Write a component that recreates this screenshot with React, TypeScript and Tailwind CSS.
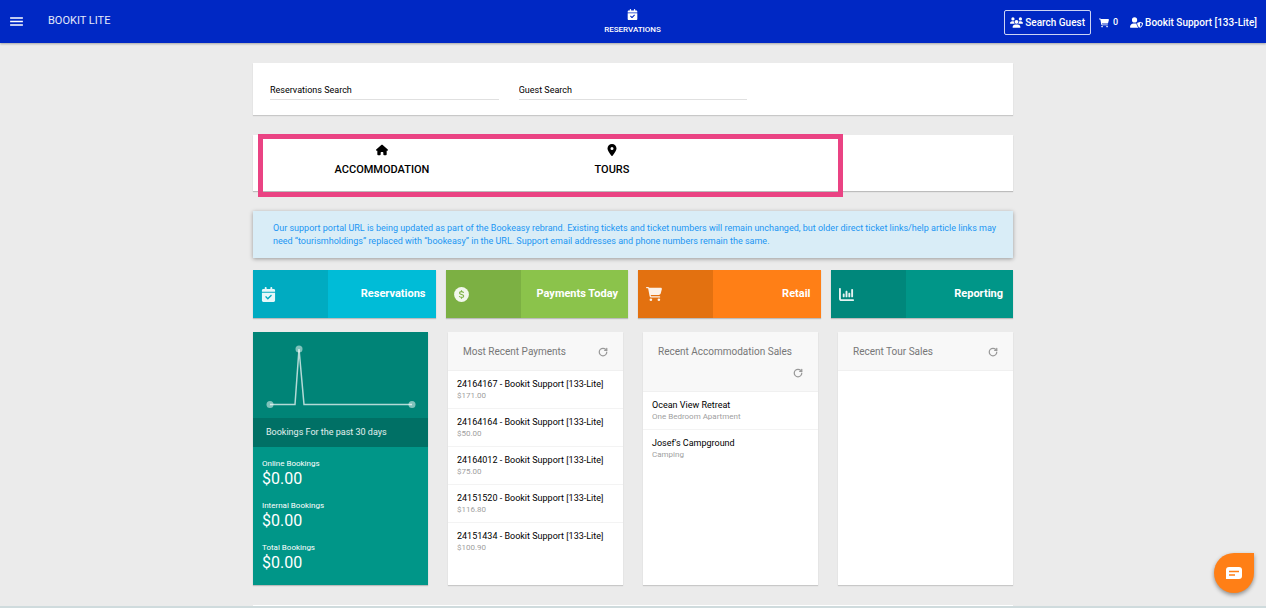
import React from "react";
import { RotateCw } from "lucide-react";
import {
  FaCalendarCheck,
  FaCartShopping,
  FaChartColumn,
  FaHouse,
  FaLocationDot,
  FaUserShield,
  FaUsers,
} from "react-icons/fa6";
import { MdMenu } from "react-icons/md";

function DollarCircle({ size }: { size: number }) {
  return (
    <svg width={size} height={size} viewBox="0 0 15 15" fill="none">
      <circle cx="7.500" cy="7.500" r="7.400" fill="currentColor" />
      <path
        d="M9.600 5.900C9.400 5 8.600 4.600 7.500 4.600C6.300 4.600 5.500 5.100 5.500 6C5.500 8 9.700 6.900 9.700 9C9.700 9.900 8.800 10.400 7.600 10.400C6.300 10.400 5.500 9.900 5.300 9M7.500 3.300V4.600M7.500 10.400V11.700"
        stroke="#7cb043"
        strokeWidth="1.100"
      />
    </svg>
  );
}

const tiles = [
  { title: "Reservations", icon: FaCalendarCheck, size: 15, dark: "bg-[#00abc1]", light: "bg-[#00bcd7]" },
  { title: "Payments Today", icon: DollarCircle, size: 15, dark: "bg-[#7cb043]", light: "bg-[#8bc34b]" },
  { title: "Retail", icon: FaCartShopping, size: 16, dark: "bg-[#e37110]", light: "bg-[#ff7f16]" },
  { title: "Reporting", icon: FaChartColumn, size: 15, dark: "bg-[#00877b]", light: "bg-[#009688]" },
];

const payments = [
  { title: "24164167 - Bookit Support [133-Lite]", sub: "$171.00" },
  { title: "24164164 - Bookit Support [133-Lite]", sub: "$50.00" },
  { title: "24164012 - Bookit Support [133-Lite]", sub: "$75.00" },
  { title: "24151520 - Bookit Support [133-Lite]", sub: "$116.80" },
  { title: "24151434 - Bookit Support [133-Lite]", sub: "$100.90" },
];

const sales = [
  { title: "Ocean View Retreat", sub: "One Bedroom Apartment" },
  { title: "Josef's Campground", sub: "Camping" },
];

const totals = [
  { label: "Online Bookings", value: "$0.00" },
  { label: "Internal Bookings", value: "$0.00" },
  { label: "Total Bookings", value: "$0.00" },
];

function Header() {
  return (
    <header className="grid h-[43px] grid-cols-[1fr_auto_1fr] items-center bg-[#0028c4] pr-[9px] pl-2 text-white shadow-[0_1px_2px_rgba(0,0,0,0.3)]">
      <div className="flex items-center gap-[23px]">
        <button aria-label="Menu" className="cursor-pointer">
          <MdMenu size={17} />
        </button>
        <a href="#" className="text-[11px] text-white/90">
          BOOKIT LITE
        </a>
      </div>
      <a href="#" className="flex flex-col items-center gap-1 pt-[2px] text-[8px] leading-3 font-medium">
        <FaCalendarCheck size={11} />
        RESERVATIONS
      </a>
      <div className="flex items-center justify-end pt-[2px] text-[10px] font-medium">
        <button className="flex h-[25px] cursor-pointer items-center gap-[2px] rounded-xs border border-white/80 px-[5px]">
          <FaUsers size={13} />
          Search Guest
        </button>
        <a href="#" className="ml-2 flex items-center gap-1 text-[9px]">
          <FaCartShopping size={10} />0
        </a>
        <a href="#" className="ml-3 flex items-center gap-[2px]">
          <FaUserShield size={13} />
          Bookit Support [133-Lite]
        </a>
      </div>
    </header>
  );
}

function ListCard({
  title,
  items,
  wrap,
}: {
  title: string;
  items: { title: string; sub: string }[];
  wrap?: boolean;
}) {
  return (
    <section className="bg-white shadow-[0_1px_1px_rgba(0,0,0,0.15)]">
      <div
        className={
          wrap
            ? "flex h-[60px] flex-col border-b border-[#f0f0f0] bg-[#f8f8f8] px-[15px] pt-3"
            : "flex h-[39px] justify-between border-b border-[#f0f0f0] bg-[#f8f8f8] px-[15px] pt-3"
        }
      >
        <h2 className="text-[10px] leading-4 text-[#777]">{title}</h2>
        <button
          aria-label={"Refresh " + title}
          className={wrap ? "mt-2 cursor-pointer self-end text-[#999]" : "cursor-pointer self-start pt-[3px] text-[#999]"}
        >
          <RotateCw size={10} strokeWidth={3} />
        </button>
      </div>
      <ul>
        {items.map((item) => (
          <li key={item.title} className="h-[38px] border-b border-[#f3f3f3] px-[9px] pt-[7px] last:border-0">
            <p className="text-[9px] leading-3 text-black">{item.title}</p>
            <p className="text-[8px] leading-3 text-[#a0a0a0]">{item.sub}</p>
          </li>
        ))}
      </ul>
    </section>
  );
}

function BookingsCard() {
  return (
    <section className="bg-[#009688] text-white shadow-[0_1px_1px_rgba(0,0,0,0.2)]">
      <div className="h-[86px] bg-[#008477]">
        <svg viewBox="0 0 175 86" className="h-full w-full" fill="none">
          <path d="M17 72.500H42L46 17L51 72.500H159" stroke="#fff" strokeOpacity="0.7" strokeWidth="1.500" />
          <circle cx="17" cy="72.500" r="3.500" fill="#fff" fillOpacity="0.5" />
          <circle cx="46" cy="17" r="3.500" fill="#fff" fillOpacity="0.5" />
          <circle cx="159" cy="72.500" r="3.500" fill="#fff" fillOpacity="0.5" />
        </svg>
      </div>
      <h2 className="flex h-[29px] items-center bg-[#007065] px-[13px] pt-px text-[9px] text-white/90">
        Bookings For the past 30 days
      </h2>
      <dl className="flex flex-col gap-3 px-[9px] pt-[11px]">
        {totals.map((total) => (
          <div key={total.label}>
            <dt className="text-[8px] leading-3">{total.label}</dt>
            <dd className="text-[16px] leading-[18px]">{total.value}</dd>
          </div>
        ))}
      </dl>
    </section>
  );
}

function App() {
  return (
    <div className="relative min-h-screen bg-[#ebebeb] font-['Roboto','Liberation_Sans',sans-serif]">
      <Header />
      <main className="mx-auto max-w-[760px] pt-5">
        <form className="grid h-[52px] grid-cols-3 gap-5 bg-white px-[17px] pt-[17px] shadow-[0_1px_1px_rgba(0,0,0,0.15)]">
          <input
            aria-label="Reservations Search"
            placeholder="Reservations Search"
            className="h-5 w-full border-b border-[#e0e0e0] text-[9px] placeholder:text-black"
          />
          <input
            aria-label="Guest Search"
            placeholder="Guest Search"
            className="h-5 w-full border-b border-[#e0e0e0] text-[9px] placeholder:text-black"
          />
        </form>

        <nav className="relative mt-5 flex h-14 bg-white pl-[14px] text-[11px] leading-4 font-medium text-black shadow-[0_1px_1px_rgba(0,0,0,0.2)]">
          <a href="#" className="flex w-[230px] flex-col items-center gap-[6px] pt-[9px]">
            <FaHouse size={12} />
            ACCOMMODATION
          </a>
          <a href="#" className="flex w-[230px] flex-col items-center gap-[6px] pt-[9px]">
            <FaLocationDot size={12} />
            TOURS
          </a>
          <div className="pointer-events-none absolute -top-px left-[5px] h-[63px] w-[585px] border-[5px] border-[#ea4383]" />
        </nav>

        <p className="mt-5 bg-[#d9edf7] pt-[11px] pr-3 pb-[10px] pl-5 text-[9px] leading-[13px] text-[#2196f3] shadow-[0_1px_4px_rgba(0,0,0,0.35)]">
          Our support portal URL is being updated as part of the Bookeasy rebrand. Existing tickets and ticket numbers
          will remain unchanged, but older direct ticket links/help article links may need “tourismholdings” replaced
          with “bookeasy” in the URL. Support email addresses and phone numbers remain the same.
        </p>

        <div className="mt-3 grid grid-cols-4 gap-[10px]">
          {tiles.map((tile) => (
            <a
              key={tile.title}
              href="#"
              className={"flex h-12 text-white shadow-[0_1px_1px_rgba(0,0,0,0.2)] " + tile.light}
            >
              <span className={"flex w-[75px] items-center pl-2 text-white/90 " + tile.dark}>
                <tile.icon size={tile.size} />
              </span>
              <span className="flex flex-1 items-center justify-end pt-px pr-[10px] text-[11px] font-bold">
                {tile.title}
              </span>
            </a>
          ))}
        </div>

        <div className="mt-[14px] grid min-h-[253px] grid-cols-4 gap-5">
          <BookingsCard />
          <ListCard title="Most Recent Payments" items={payments} />
          <ListCard title="Recent Accommodation Sales" items={sales} wrap />
          <ListCard title="Recent Tour Sales" items={[]} />
        </div>
        <div className="mt-5 h-px bg-white" />
      </main>
      <div className="h-[2px] bg-[#cfdbdd]" />

      <button
        aria-label="Open chat"
        className="fixed right-3 bottom-[15px] flex size-10 cursor-pointer items-center justify-center rounded-full rounded-tr-sm bg-[#ff7f16] shadow-[0_2px_4px_rgba(0,0,0,0.4)]"
      >
        <svg viewBox="0 0 16 12" className="w-4" fill="none">
          <path d="M3 0H13A3 3 0 0 1 16 3V9A3 3 0 0 1 13 12H0V3A3 3 0 0 1 3 0Z" fill="#fff" />
          <path d="M3 4.500H13M3 8H9" stroke="#ff7f16" strokeWidth="1.500" />
        </svg>
      </button>
    </div>
  );
}

export default App;
